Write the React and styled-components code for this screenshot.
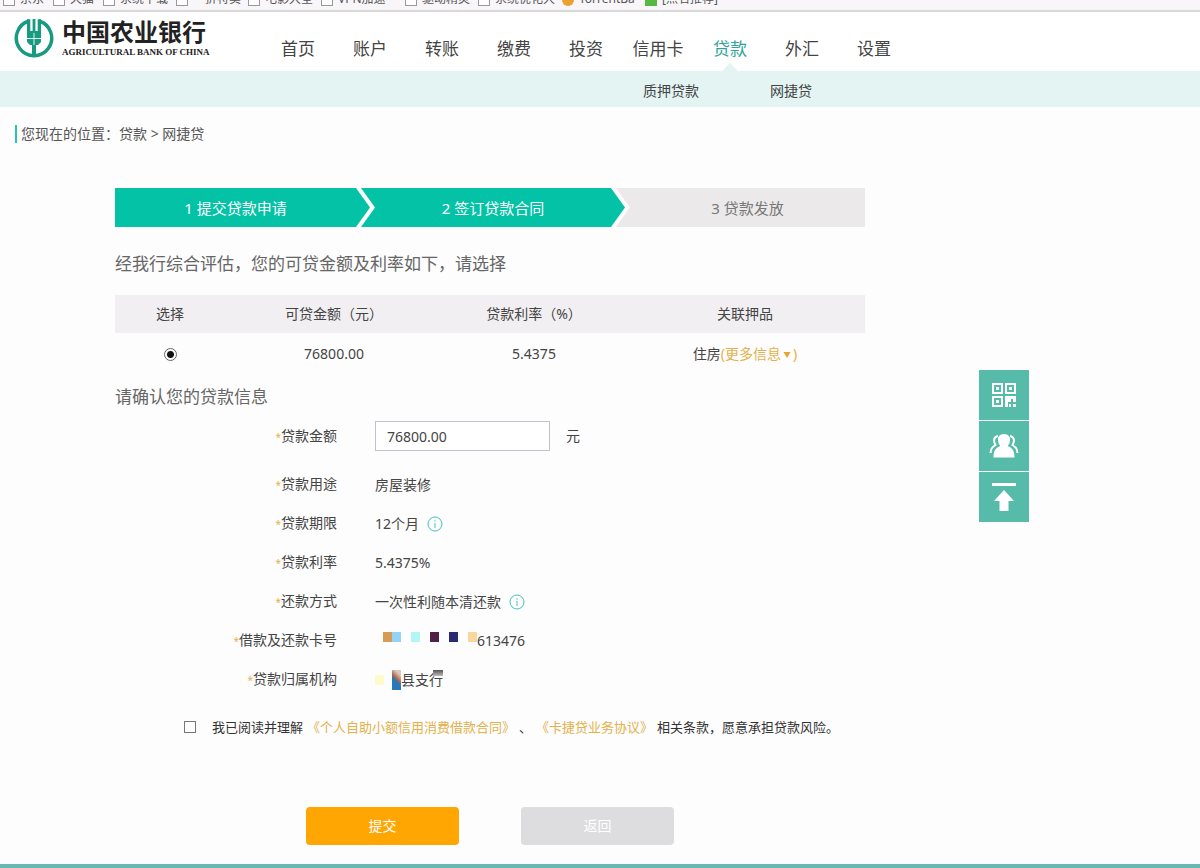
import React from 'react';
import { useState } from 'react';
import styled, { createGlobalStyle } from 'styled-components';

const bookmarks = [
    { text: "京东", width: 50 },
    { text: "天猫", width: 50 },
    { text: "系统下载", width: 73 },
    { text: "一折特卖", width: 72 },
    { text: "电影大全", width: 73 },
    { text: "VPN加速", width: 84 },
    { text: "驱动精灵", width: 73 },
    { text: "系统优化大", width: 84 },
    { text: "TorrentBa", width: 83, icon: "torrent" },
    { text: "[点名推荐]", width: 90, icon: "green" },
]

const menu = ["首页", "账户", "转账", "缴费", "投资", "信用卡", "贷款", "外汇", "设置"]

export default function App() {
    return (
        <Page>
            <GlobalStyle />
            <Bookmarks />
            <Header>
                <Brand href="#">
                    <Logo />
                    <BrandText>
                        <strong>中国农业银行</strong>
                        <small>AGRICULTURAL BANK OF CHINA</small>
                    </BrandText>
                </Brand>
                <Menu>
                    {menu.map((item) => <MenuLink key={item} href="#" $active={item === "贷款"}>{item}</MenuLink>)}
                </Menu>
            </Header>
            <SubMenu>
                <a href="#">质押贷款</a>
                <a href="#">网捷贷</a>
            </SubMenu>
            <Breadcrumb>您现在的位置：贷款 &gt; 网捷贷</Breadcrumb>
            <Body>
                <Content>
                    <Steps>
                        <Step $share={255} $first $done>1 提交贷款申请</Step>
                        <Step $share={264} $done>2 签订贷款合同</Step>
                        <Step $share={249} $last>3 贷款发放</Step>
                    </Steps>
                    <Title $top={27} $bottom={21}>经我行综合评估，您的可贷金额及利率如下，请选择</Title>
                    <Offers />
                    <Title $top={12} $bottom={0}>请确认您的贷款信息</Title>
                    <LoanForm />
                </Content>
                <SideTools />
            </Body>
            <BottomLine />
        </Page>
    )
}

function Bookmarks() {
    return (
        <BookmarkBar>
            {bookmarks.map((b) => (
                <Bookmark key={b.text} $width={b.width}>
                    <BookmarkIcon $icon={b.icon} />
                    {b.text}
                </Bookmark>
            ))}
        </BookmarkBar>
    )
}

function Offers() {
    return (
        <Table>
            <colgroup>
                <col width="110" />
                <col width="218" />
                <col width="182" />
                <col width="240" />
            </colgroup>
            <thead>
                <tr>
                    <th>选择</th>
                    <th>可贷金额（元）</th>
                    <th>贷款利率（%）</th>
                    <th>关联押品</th>
                </tr>
            </thead>
            <tbody>
                <tr>
                    <td><Radio type="radio" name="offer" aria-label="选择 76800.00" defaultChecked /></td>
                    <td>76800.00</td>
                    <td>5.4375</td>
                    <td>住房<More href="#">(更多信息<Caret viewBox="0 0 8 8"><path d="M0.5 1h7L4 7z" /></Caret>)</More></td>
                </tr>
            </tbody>
        </Table>
    )
}

function LoanForm() {
    const [amount, setAmount] = useState("76800.00")
    const [agreed, setAgreed] = useState(false)

    function submit(event) {
        event.preventDefault();
    }

    return (
        <form onSubmit={submit}>
            <Row $tall>
                <Label as="label" htmlFor="amount">贷款金额</Label>
                <Value>
                    <Amount id="amount" type="text" value={amount} onChange={e => setAmount(e.target.value)} />
                    元
                </Value>
            </Row>
            <Row>
                <Label>贷款用途</Label>
                <Value>房屋装修</Value>
            </Row>
            <Row>
                <Label>贷款期限</Label>
                <Value>12个月<Info /></Value>
            </Row>
            <Row>
                <Label>贷款利率</Label>
                <Value>5.4375%</Value>
            </Row>
            <Row>
                <Label>还款方式</Label>
                <Value>一次性利随本清还款<Info /></Value>
            </Row>
            <Row>
                <Label>借款及还款卡号</Label>
                <Value>
                    <Mask>
                        <Tile $color="#d49c56" />
                        <Tile $color="#95d3f6" />
                        <Tile />
                        <Tile $color="#b3f7f5" />
                        <Tile />
                        <Tile $color="#4f2149" />
                        <Tile />
                        <Tile $color="#2a2a70" />
                        <Tile />
                        <Tile $color="#f7d79c" />
                    </Mask>
                    613476
                </Value>
            </Row>
            <Row>
                <Label>贷款归属机构</Label>
                <Value>
                    <Tile $color="#fdfbc9" />
                    <Smear />
                    县支<Covered>行</Covered>
                </Value>
            </Row>
            <Agreement>
                <Check id="agree" type="checkbox" checked={agreed} onChange={e => setAgreed(e.target.checked)} />
                <label htmlFor="agree">
                    我已阅读并理解
                    <a href="#">《个人自助小额信用消费借款合同》</a>
                    、
                    <a href="#">《卡捷贷业务协议》</a>
                    相关条款，愿意承担贷款风险。
                </label>
            </Agreement>
            <Actions>
                <Button type="submit" $primary>提交</Button>
                <Button type="button">返回</Button>
            </Actions>
        </form>
    )
}

function SideTools() {
    return (
        <Tools>
            <Tool type="button" aria-label="二维码">
                <svg viewBox="0 0 24 24" width="24" height="24">
                    <g fill="none" stroke="#fff" strokeWidth="2">
                        <path d="M1 1h9v9h-9zM14 1h9v9h-9zM1 14h9v9h-9z" />
                    </g>
                    <path fill="#fff" d="M4 4h3v3h-3zM17 4h3v3h-3zM4 17h3v3h-3zM13 13h11v6h-3v-3h-2v3h-3v5h-3zM17 21h2v3h-2zM21 21h3v3h-3z" />
                </svg>
            </Tool>
            <Tool type="button" aria-label="客服">
                <svg viewBox="0 0 30 26" width="30" height="26">
                    <g fill="none" stroke="#fff" strokeWidth="2">
                        <path d="M9 3C4.500 4 4 8 6.500 12C3 14 1.500 16 1.500 20" />
                        <path d="M21 3C25.500 4 26 8 23.500 12C27 14 28.500 16 28.500 20" />
                    </g>
                    <path fill="#fff" d="M15 1C10.500 1 8.500 4 9 7.500C9.200 10 10 11.500 11.300 13C7 15 4.500 17 4.500 24.500H25.500C25.500 17 23 15 18.700 13C20 11.500 20.800 10 21 7.500C21.500 4 19.500 1 15 1Z" />
                </svg>
            </Tool>
            <Tool type="button" aria-label="返回顶部">
                <svg viewBox="0 0 26 30" width="26" height="30">
                    <path fill="#fff" d="M1 1h24v3h-24zM13 8L23 19H17.500V29H8.500V19H3z" />
                </svg>
            </Tool>
        </Tools>
    )
}

function Logo() {
    return (
        <svg viewBox="0 0 40 40" width="40" height="40">
            <g fill="none" stroke="#169a80" strokeWidth="3.400">
                <path d="M15 3A17.700 17.700 0 1 0 25 3" />
            </g>
            <path fill="#169a80" d="M13 1.200H16.300V13H18.600V1H21.400V13H23.700V1.200H27V24L24 27H22V38H18V27H16L13 24z" />
            <path fill="none" stroke="#fff" strokeWidth="0.900" d="M13 20.500h14M20 15v12" />
        </svg>
    )
}

function Info() {
    return (
        <InfoIcon viewBox="0 0 16 16">
            <circle cx="8" cy="8" r="7" />
            <path d="M8 7v5M8 4.200v1.400" />
        </InfoIcon>
    )
}

const GlobalStyle = createGlobalStyle`
    * {
        box-sizing: border-box;
    }
    body {
        margin: 0;
        background-color: #fdfdfd;
        color: #444;
        font-family: 'Noto Sans', 'Noto Sans CJK SC', sans-serif;
        font-size: 14px;
        line-height: 20px;
    }
    a {
        color: inherit;
        text-decoration: none;
    }
`;
const Page = styled.div`
    min-height: 100vh;
    display: flex;
    flex-direction: column;
`;
const BookmarkBar = styled.div`
    height: 12px;
    padding-left: 3px;
    display: flex;
    align-items: flex-end;
    overflow: hidden;
    background-color: #f8f6f9;
    border-bottom: 2px solid #d8d8d8;
`;
const Bookmark = styled.span`
    width: ${props => props.$width}px;
    flex-shrink: 0;
    display: flex;
    align-items: flex-end;
    gap: 5px;
    padding-bottom: 4px;
    font-size: 12px;
    line-height: 14px;
    white-space: nowrap;
    color: #555;
`;
const BookmarkIcon = styled.i`
    width: 12px;
    height: 13px;
    flex-shrink: 0;
    background-color: ${props => {
        if (props.$icon === "torrent") return '#e9a132'
        if (props.$icon === "green") return '#55b943'
        return '#fff'
    }};
    border: ${props => props.$icon ? 'none' : '1px solid #999'};
    border-radius: ${props => props.$icon === "torrent" ? '6px' : '0'};
`;
const Header = styled.header`
    height: 59px;
    padding-left: 14px;
    display: flex;
    background-color: #fff;
`;
const Brand = styled.a`
    width: 248px;
    padding-top: 6px;
    flex-shrink: 0;
    display: flex;
    gap: 8px;
`;
const BrandText = styled.span`
    display: flex;
    flex-direction: column;
    white-space: nowrap;
    color: #222;
    strong {
        font-size: 24px;
        line-height: 28px;
    }
    small {
        font-family: 'Liberation Serif', serif;
        font-weight: 700;
        font-size: 9px;
        line-height: 12px;
    }
`;
const Menu = styled.nav`
    display: flex;
    padding-top: 15px;
`;
const MenuLink = styled.a`
    position: relative;
    width: 72px;
    display: flex;
    align-items: center;
    justify-content: center;
    font-size: 17px;
    color: ${props => props.$active ? '#2fa496' : '#444'};
    &::after {
        content: '';
        display: ${props => props.$active ? 'block' : 'none'};
        position: absolute;
        bottom: 0;
        border: 8px solid transparent;
        border-top-width: 0;
        border-bottom-color: #e3f4f3;
    }
`;
const SubMenu = styled.nav`
    height: 36px;
    padding: 4px 0 0 643px;
    display: flex;
    align-items: center;
    gap: 71px;
    background-color: #e3f4f3;
`;
const Breadcrumb = styled.div`
    margin: 18px 15px 45px;
    padding-left: 4px;
    border-left: 2px solid #27c4b0;
    line-height: 18px;
    color: #555;
`;
const Body = styled.main`
    display: flex;
    align-items: flex-start;
    gap: 114px;
    padding-left: 115px;
`;
const Content = styled.div`
    flex: 0 1 750px;
`;
const Steps = styled.div`
    display: flex;
    height: 39px;
`;
const Step = styled.div`
    flex: 1 1 ${props => props.$share}px;
    margin-left: ${props => props.$first ? '0' : '-9px'};
    padding-left: ${props => props.$last ? '14px' : '0'};
    padding-right: ${props => props.$first ? '14px' : '0'};
    display: flex;
    align-items: center;
    justify-content: center;
    font-size: 15px;
    color: ${props => props.$done ? '#fff' : '#777'};
    background-color: ${props => props.$done ? '#04c2a6' : '#ebe9ea'};
    clip-path: ${props => {
        if (props.$first) {
            return 'polygon(0 0, calc(100% - 14px) 0, 100% 50%, calc(100% - 14px) 100%, 0 100%)'
        } else if (props.$last) {
            return 'polygon(0 0, 100% 0, 100% 100%, 0 100%, 14px 50%)'
        }
        return 'polygon(0 0, calc(100% - 14px) 0, 100% 50%, calc(100% - 14px) 100%, 0 100%, 14px 50%)'
    }};
`;
const Title = styled.h1`
    margin: 0;
    padding: ${props => props.$top}px 0 ${props => props.$bottom}px;
    font-size: 17px;
    font-weight: 400;
    line-height: 20px;
    color: #666;
`;
const Table = styled.table`
    width: 100%;
    table-layout: fixed;
    border-collapse: collapse;
    text-align: center;
    th, td {
        padding: 0;
        font-weight: 400;
        vertical-align: middle;
    }
    th {
        height: 38px;
        background-color: #f1eff1;
    }
    td {
        height: 42px;
    }
`;
const Radio = styled.input`
    appearance: none;
    display: block;
    width: 13px;
    height: 13px;
    margin: 0 auto;
    border: 1px solid #666;
    border-radius: 50%;
    background-color: #fff;
    &:checked {
        background-image: radial-gradient(circle, #111 3px, transparent 4px);
    }
`;
const More = styled.a`
    color: #e3b04b;
`;
const Caret = styled.svg`
    width: 8px;
    height: 8px;
    margin: 0 2px;
    fill: #e3a52f;
`;
const Row = styled.div`
    height: ${props => props.$tall ? '58px' : '39px'};
    display: flex;
    align-items: center;
    gap: 38px;
`;
const Label = styled.span`
    width: 222px;
    flex-shrink: 0;
    text-align: right;
    &::before {
        content: '*';
        font-size: 10px;
        color: #e3b04b;
    }
`;
const Value = styled.span`
    display: flex;
    align-items: center;
`;
const Amount = styled.input`
    width: 175px;
    height: 30px;
    margin-right: 16px;
    padding: 0 11px;
    border: 1px solid #c4c0cb;
    background-color: #fff;
    font: inherit;
    color: #444;
`;
const InfoIcon = styled.svg`
    width: 16px;
    height: 16px;
    margin-left: 8px;
    fill: none;
    stroke: #45c2bb;
`;
const Mask = styled.span`
    display: flex;
    padding: 0 0 7px 8px;
`;
const Tile = styled.i`
    width: ${props => props.$color ? '9px' : '10px'};
    height: 10px;
    background-color: ${props => props.$color || 'transparent'};
`;
const Smear = styled.i`
    width: 9px;
    height: 20px;
    margin-left: 8px;
    background: linear-gradient(45deg, #2877b8 45%, #a9674f 55%, #dfc4b8 80%);
`;
const Covered = styled.span`
    position: relative;
    &::after {
        content: '';
        position: absolute;
        top: 0;
        right: 0;
        width: 10px;
        height: 6px;
        background: linear-gradient(#555, #bbb);
    }
`;
const Agreement = styled.div`
    height: 56px;
    padding-left: 69px;
    display: flex;
    align-items: center;
    gap: 16px;
    font-size: 13px;
    white-space: nowrap;
    color: #333;
    label {
        display: flex;
    }
    a {
        margin: 0 4px;
        color: #e3b04b;
    }
`;
const Check = styled.input`
    appearance: none;
    width: 12px;
    height: 12px;
    margin: 0;
    border: 1px solid #777;
    background-color: #fff;
    &:checked {
        background-color: #04c2a6;
    }
`;
const Actions = styled.div`
    display: flex;
    gap: 62px;
    padding: 52px 0 19px 191px;
`;
const Button = styled.button`
    width: 153px;
    height: 38px;
    border: none;
    border-radius: 4px;
    font: inherit;
    color: #fff;
    background-color: ${props => props.$primary ? '#ffa603' : '#dddcde'};
`;
const Tools = styled.aside`
    margin-top: 182px;
    display: flex;
    flex-direction: column;
    gap: 1px;
`;
const Tool = styled.button`
    width: 50px;
    height: 50px;
    padding: 0;
    border: none;
    display: flex;
    align-items: center;
    justify-content: center;
    background-color: #56bca9;
`;
const BottomLine = styled.footer`
    height: 4px;
    margin-top: auto;
    background-color: #69b9b0;
`;
